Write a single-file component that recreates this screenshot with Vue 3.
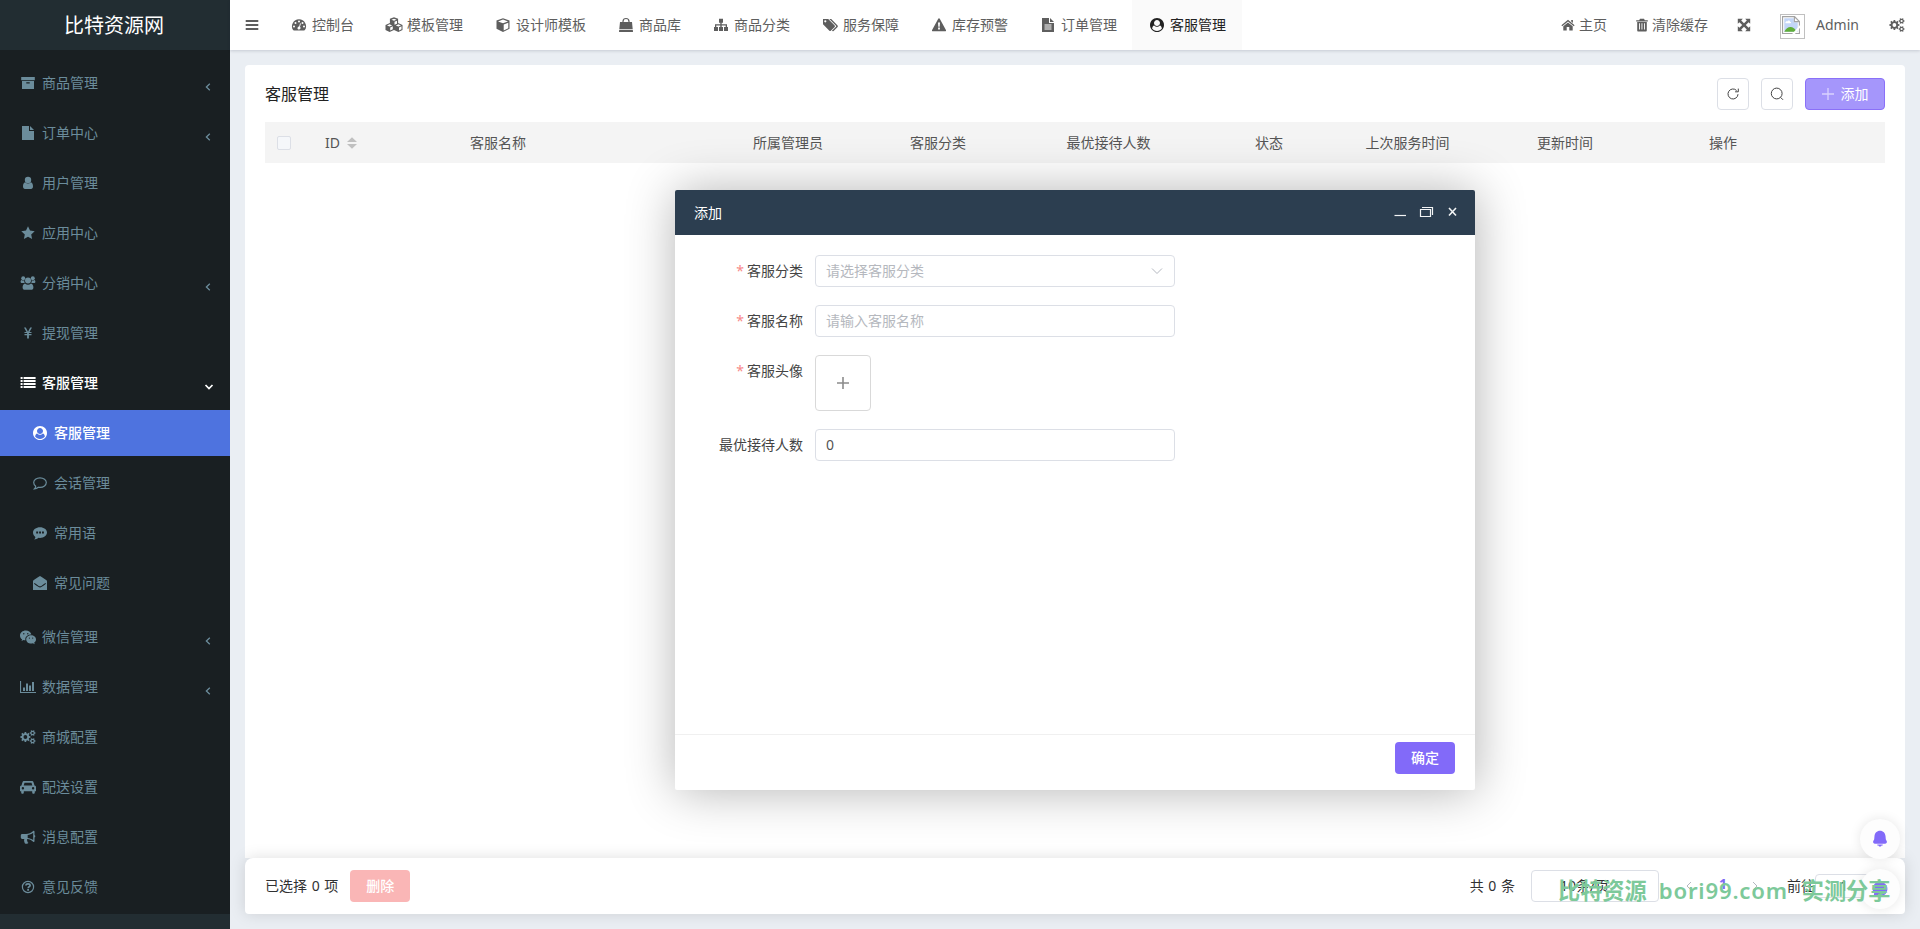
<script setup>
// Builds a cog outline with a round hole, for use with fill-rule="evenodd"
function gear(cx, cy, outer, inner, teeth, hole) {
  const step = (Math.PI * 2) / teeth
  const pt = (r, a) => (cx + r * Math.cos(a)).toFixed(2) + ' ' + (cy + r * Math.sin(a)).toFixed(2)
  const pts = []
  for (let i = 0; i < teeth; i++) {
    const a = i * step
    pts.push(pt(inner, a - step * 0.3), pt(outer, a - step * 0.2), pt(outer, a + step * 0.2), pt(inner, a + step * 0.3))
  }
  return `<path fill-rule="evenodd" d="M${pts.join('L')}ZM${cx - hole} ${cy}a${hole} ${hole} 0 1 0 ${hole * 2} 0a${hole} ${hole} 0 1 0 ${-hole * 2} 0Z"/>`
}

const icons = {
  archive: '<path fill-rule="evenodd" d="M1.2 2h13.6v3.2H1.2zM2 6h12v8H2zM6.3 7.2v1.2h3.4V7.2z"/>',
  file: '<path d="M2 1h7v5h5v9H2zM10 1l4 4h-4z"/>',
  user: '<circle cx="8" cy="5" r="3.2"/><path d="M5.2 7.3C3.6 7.8 3 9.600 3 11.500c0 1.500.8 2.500 2 2.500h6c1.200 0 2-1 2-2.500 0-1.900-.6-3.700-2.200-4.200a4.200 4.200 0 0 1-5.600 0z"/>',
  star: '<path d="M8 1.200l2 4.400 4.700.6-3.500 3.200.9 4.700L8 11.800l-4.100 2.300.9-4.700L1.300 6.200 6 5.600z"/>',
  users: '<circle cx="3.200" cy="3.300" r="2"/><circle cx="12.800" cy="3.300" r="2"/><circle cx="8" cy="5.600" r="3"/><path d="M4.500 5.300c-.5 1.300-.1 2.100.3 2.700H2C1.100 8 .6 7.500.6 6.700c0-.8.3-1.600.9-1.800 1.100.8 2.200.7 3 .4zM11.500 5.300c.5 1.300.1 2.100-.3 2.700H14c.9 0 1.400-.5 1.400-1.300 0-.8-.3-1.600-.9-1.800-1.100.8-2.200.7-3 .4zM5 8.400c-1.600.5-2.400 2-2.400 4 0 1.500.9 2.400 2.300 2.400h6.200c1.400 0 2.300-.9 2.300-2.400 0-2-.8-3.500-2.400-4a4.400 4.400 0 0 1-6 0z"/>',
  yen: '<path d="M4 2.500h1.800L8 6.700l2.200-4.200H12L9.500 7H11.500v1.100H8.900v1h2.600v1.100H8.900v3.300H7.100v-3.300H4.500V9.100h2.600v-1H4.500V7h2z"/>',
  list: '<path d="M.6 2h2v2h-2zM3.600 2h12v2h-12zM.6 5h2v2h-2zM3.600 5h12v2h-12zM.6 8h2v2h-2zM3.600 8h12v2h-12zM.6 11h2v2h-2zM3.600 11h12v2h-12z"/>',
  circleUser: '<path transform="translate(1 1) scale(.0078125)" d="M1523 1339q-22-155-87.500-257.500T1251 963q-67 74-159.500 115.500T896 1120t-195.500-41.500T541 963q-119 16-184.500 118.500T269 1339q106 150 271 237.500t356 87.500 356-87.500 271-237.500zM1280 640q0-159-112.500-271.500T896 256 624.500 368.500 512 640t112.500 271.500T896 1024t271.500-112.500T1280 640zm512 256q0 182-71 347.500t-190.500 286T1245 1721t-349 71q-182 0-348-71t-286-191-191-286T0 896t71-348 191-286T548 71 896 0t348 71 286 191 191 286 71 348z"/>',
  comment: '<path fill="none" stroke="currentColor" stroke-width="1.200" d="M8 2.800c3.600 0 6.300 2.200 6.300 4.800S11.600 12.400 8 12.400c-.6 0-1.100 0-1.600-.2-1.200 1-2.500 1.600-4 1.700.8-.8 1.200-1.600 1.300-2.600C2.400 10.400 1.700 9.100 1.700 7.600 1.700 5 4.400 2.800 8 2.800z"/>',
  commenting: '<path fill-rule="evenodd" d="M8 2.300c3.900 0 7 2.400 7 5.300s-3.100 5.300-7 5.300l-1.500-.1c-1.200 1-2.700 1.700-4.300 1.700.8-.8 1.200-1.700 1.200-2.600C1.900 10.900 1 9.400 1 7.600c0-2.900 3.100-5.300 7-5.300zM4.200 6.600v2h1.900v-2zm2.900 0v2H9v-2zm2.900 0v2h1.900v-2z"/>',
  envelope: '<path fill-rule="evenodd" d="M8 1c2 1.100 5.200 3 7 4.800V15H1V5.800C2.800 4 6 2.100 8 1zM2.600 8l-.6.800c1.500 1.100 3 2.300 4.300 3 1.300.8 2.100.8 3.400 0 1.300-.7 2.800-1.900 4.300-3l-.6-.8c-1.500 1.100-2.800 2.100-4.100 2.900-1 .6-1.600.6-2.600 0C5.400 10.100 4.100 9.100 2.600 8z"/>',
  wechat: '<path fill-rule="evenodd" d="M5.800 1.500c3 0 5.200 1.800 5.600 4.100C8 5.600 5.300 7.700 5.300 10.300l.1 1c-.7 0-1.300-.1-1.900-.3l-2 1.100.6-1.800C.8 9.400 0 8 0 6.400c0-2.700 2.600-4.900 5.800-4.900zM3.800 4a.7.7 0 1 0 0 1.400.7.7 0 0 0 0-1.400zM7.800 4a.7.7 0 1 0 0 1.400.7.7 0 0 0 0-1.400z"/><path fill-rule="evenodd" d="M11.100 6.300c2.700 0 4.900 1.800 4.900 4.100 0 1.300-.7 2.400-1.800 3.200l.5 1.600-1.800-1c-.6.2-1.200.3-1.800.3-2.700 0-4.900-1.800-4.900-4.100s2.200-4.100 4.900-4.100zM9.400 8.500a.6.6 0 1 0 0 1.200.6.6 0 0 0 0-1.200zM12.700 8.500a.6.6 0 1 0 0 1.200.6.6 0 0 0 0-1.200z"/>',
  chart: '<path d="M0 2h1.100v11H16v1.100H0zM3 8.500h2V12H3zM6 4.500h2V12H6zM9 6.500h2V12H9zM12 3h2v9h-2z"/>',
  cogs: gear(5.4, 8, 5.1, 3.9, 8, 1.9) + gear(12.6, 4, 3, 2.2, 6, 1.1) + gear(12.6, 12, 3, 2.2, 6, 1.1),
  car: '<path fill-rule="evenodd" d="M4.300 2h7.400c.9 0 1.600.5 1.900 1.400l.9 3.100c.9.200 1.500.8 1.500 1.800v4h-1.200v1c0 1-.5 1.500-1.300 1.500s-1.300-.5-1.300-1.500v-1H3.800v1c0 1-.5 1.500-1.300 1.500S1.200 14.300 1.200 13.300v-1H0v-4c0-1 .6-1.600 1.500-1.800l.9-3.100C2.700 2.500 3.400 2 4.300 2zM4.500 3.700l-.8 2.800h8.600l-.8-2.800zM2.900 8a1.200 1.200 0 1 0 0 2.400 1.200 1.200 0 0 0 0-2.400zM13.100 8a1.200 1.200 0 1 0 0 2.400 1.200 1.200 0 0 0 0-2.400z"/>',
  horn: '<path fill-rule="evenodd" d="M13.500 1.800c.7 0 1 .4 1 1v3.300c1.100.3 1.100 2.200 0 2.500v3.300c0 .6-.3 1-1 1-2.100-1.800-4.200-2.700-6-2.900-.8.500-.7 1.300 0 2-.4.700.2 1.300.9 1.800-.6 1.200-2.800 1.200-3.600.4-.4-1.500-1.100-2.700-.5-4.300H2.200C1.400 9.900.8 9.400.8 8.600V6.400c0-.8.600-1.400 1.400-1.400H6c2.500 0 5-1.100 7.500-3.200zM13.200 3.700C11.400 5 9.500 5.800 7.700 6v2.900c1.800.2 3.700.9 5.500 2.200z"/>',
  question: '<circle cx="8" cy="8" r="5.600" fill="none" stroke="currentColor" stroke-width="1.200"/><path fill="none" stroke="currentColor" stroke-width="1.700" d="M5.900 6.500C6 5.300 6.900 4.800 8 4.800c1.300 0 2.100.6 2.100 1.600 0 1.300-1.900 1.300-1.900 2.900"/><path d="M7.200 10.100h1.800v1.600H7.200z"/>',
  bars: '<path d="M1.700 3h12.600v2H1.700zM1.700 7h12.600v2H1.700zM1.700 11h12.600v2H1.700z"/>',
  gauge: '<path fill-rule="evenodd" d="M8 2.300a7 7 0 0 1 5.900 10.800c-.2.300-.5.500-.8.500H2.900c-.3 0-.6-.2-.8-.5A7 7 0 0 1 8 2.300zM3 8.400a1 1 0 1 0 0 2 1 1 0 0 0 0-2zM4.500 4.900a1 1 0 1 0 0 2 1 1 0 0 0 0-2zM8 3.400a1 1 0 1 0 0 2 1 1 0 0 0 0-2zM11.500 4.900a1 1 0 1 0 0 2 1 1 0 0 0 0-2zM13 8.400a1 1 0 1 0 0 2 1 1 0 0 0 0-2zM9 6.300l-.8 3.100c-.9 0-1.600.6-1.700 1.500 0 .9.600 1.700 1.500 1.700 1.500 0 2.100-1.800 1-2.800l.9-3.200z"/>',
  cube: '<path fill-rule="evenodd" d="M8 1.200l6.500 2.400v8.200L8 15l-6.500-3.200V3.600zM8 2.600L3 4.400l5 1.900 5-1.900zM8.700 7.500v6l4.600-2.300V5.800z"/>',
  cubes: '<path fill-rule="evenodd" d="M8 .3l4.100 1.500v4.300L16.500 8v5L12.400 15 8 13l-4.400 2-4.100-2V8l4.400-1.900V1.800zM8 1.700L5.500 2.700 8 3.700l2.500-1zM8.500 4.800v3l2.500-1.100V3.700zM3.600 7.300L1 8.400l2.600 1.200 2.600-1.200zM4.200 10.500v3.100L6.800 12.300V9.300zM12.400 7.300L9.800 8.400l2.600 1.200L15 8.400zM13 10.500v3.100l2.500-1.300V9.300z"/>',
  bag: '<path fill="none" stroke="currentColor" stroke-width="1.200" d="M5 7V4.500C5 2.500 6.300 1.500 8 1.500s3 1 3 3V7"/><path d="M2 5h12l.7 7H1.300zM1.200 12.800h13.600l.2 2.200H1z"/>',
  sitemap: '<path d="M6 1.800h4v4H8.700v1.500H14v2.600h1v4h-4v-4h1.700V8.500h-4v1.400H10v4H6v-4h1.300V8.500h-4v1.400H5v4H1v-4h1V7.300h5.300V5.800H6z"/>',
  tags: '<path fill-rule="evenodd" d="M1 2h5.200l6.500 6.500c.4.400.4 1 0 1.400l-3.900 3.900c-.4.400-1 .4-1.400 0L1 7.300zM3.300 3.200a1.100 1.100 0 1 0 0 2.200 1.100 1.100 0 0 0 0-2.200z"/><path d="M7.300 2h1.900l6.400 6.500c.4.400.4 1 0 1.400l-4 4c-.6.600-1.200.4-1.700-.1L14 9.700c.3-.3.300-.7 0-1z"/>',
  warning: '<path fill-rule="evenodd" d="M8 1.300c.4 0 .7.200.9.600l6 11c.4.700 0 1.400-.8 1.400H1.900c-.8 0-1.200-.7-.8-1.400l6-11c.2-.4.500-.6.900-.6zM7 5.500l.3 4.200h1.400L9 5.500zM7.100 10.600v1.800h1.800v-1.800z"/>',
  fileText: '<path fill-rule="evenodd" d="M2 1h7v5h5v9H2zM10 1l4 4h-4zM4.500 7.600v1h7v-1zm0 2v1h7v-1zm0 2v1h7v-1z"/>',
  home: '<path d="M8 2.700l6.600 5.600-.8 1L8 4.400 2.200 9.300l-.8-1zM11.200 3h1.700v3l-1.700-1.500zM8 5.400L12.700 9.300V13.500H9.300V10H6.700v3.500H3.300V9.300z"/>',
  trash: '<path d="M6 1.800h4l.8 1.400h3v1.200H2.200V3.200h3z"/><path fill-rule="evenodd" d="M3.200 5h9.600v8.200c0 .8-.4 1.300-1.100 1.300H4.300c-.7 0-1.100-.5-1.100-1.300zM5 6.200v6.400h.9V6.200zm2.500 0v6.400h.9V6.200zm2.500 0v6.400h.9V6.200z"/>',
  expand: '<path d="M1.800 1.800h5L5.200 3.400 8 6.200l2.800-2.800-1.600-1.600h5v5l-1.600-1.600L9.800 8l2.800 2.800 1.600-1.600v5h-5l1.600-1.600L8 9.800l-2.800 2.800 1.600 1.600h-5v-5l1.600 1.600L6.200 8 3.400 5.200 1.800 6.800z"/>',
}

const menu = [
  { text: '商品管理', icon: 'archive', more: true },
  { text: '订单中心', icon: 'file', more: true },
  { text: '用户管理', icon: 'user' },
  { text: '应用中心', icon: 'star' },
  { text: '分销中心', icon: 'users', more: true },
  { text: '提现管理', icon: 'yen' },
  {
    text: '客服管理',
    icon: 'list',
    open: true,
    children: [
      { text: '客服管理', icon: 'circleUser', active: true },
      { text: '会话管理', icon: 'comment' },
      { text: '常用语', icon: 'commenting' },
      { text: '常见问题', icon: 'envelope' },
    ],
  },
  { text: '微信管理', icon: 'wechat', more: true },
  { text: '数据管理', icon: 'chart', more: true },
  { text: '商城配置', icon: 'cogs' },
  { text: '配送设置', icon: 'car' },
  { text: '消息配置', icon: 'horn' },
  { text: '意见反馈', icon: 'question' },
]

const tabs = [
  { text: '控制台', icon: 'gauge' },
  { text: '模板管理', icon: 'cubes' },
  { text: '设计师模板', icon: 'cube' },
  { text: '商品库', icon: 'bag' },
  { text: '商品分类', icon: 'sitemap' },
  { text: '服务保障', icon: 'tags' },
  { text: '库存预警', icon: 'warning' },
  { text: '订单管理', icon: 'fileText' },
  { text: '客服管理', icon: 'circleUser', active: true },
]

const columns = ['客服名称', '所属管理员', '客服分类', '最优接待人数', '状态', '上次服务时间', '更新时间', '操作']
</script>

<template>
  <div class="app">
    <aside class="sidebar">
      <div class="brand">比特资源网</div>
      <nav class="menu">
        <template v-for="item in menu" :key="item.text">
          <a class="menu-item" :class="{ open: item.open }">
            <svg class="ico" viewBox="0 0 16 16" v-html="icons[item.icon]"></svg>
            <span>{{ item.text }}</span>
            <svg v-if="item.more" class="arrow" viewBox="0 0 10 10"><path d="M6.800 1.700L3.400 5l3.400 3.300" /></svg>
            <svg v-if="item.open" class="arrow" viewBox="0 0 10 10"><path d="M1.500 3L5 6.500 8.500 3" /></svg>
          </a>
          <div v-if="item.children" class="submenu">
            <a v-for="sub in item.children" :key="sub.text" class="menu-item sub" :class="{ active: sub.active }">
              <svg class="ico" viewBox="0 0 16 16" v-html="icons[sub.icon]"></svg>
              <span>{{ sub.text }}</span>
            </a>
          </div>
        </template>
      </nav>
    </aside>

    <div class="main">
      <header class="topbar">
        <svg class="ico burger" viewBox="0 0 16 16" v-html="icons.bars"></svg>
        <nav class="tabs">
          <a v-for="tab in tabs" :key="tab.text" class="tab" :class="{ current: tab.active }">
            <span class="tab-icon"><svg class="ico" viewBox="0 0 16 16" v-html="icons[tab.icon]"></svg></span>
            <span>{{ tab.text }}</span>
          </a>
        </nav>
        <div class="tools">
          <a class="tool home"><svg class="ico" viewBox="0 0 16 16" v-html="icons.home"></svg>主页</a>
          <a class="tool clear"><svg class="ico" viewBox="0 0 16 16" v-html="icons.trash"></svg>清除缓存</a>
          <svg class="ico" viewBox="0 0 16 16" v-html="icons.expand"></svg>
          <span class="avatar">
            <svg viewBox="0 0 16 16">
              <path d="M.5.500h10.500l4.500 4.500v10.500H.5z" fill="#fff" stroke="#a3a3a3" />
              <path d="M2 2h8.500v3.500H14V14H2z" fill="#c3d6f8" />
              <path d="M3 6c0-1 1-1.500 1.700-1.200C5.200 3.500 7 3.700 7.200 5c1 0 1.300 1.300.3 1.500H3.600C3.200 6.500 3 6.300 3 6z" fill="#fff" />
              <path d="M2 14c1.500-3 3.500-4.500 6-4.300 2 .2 4 2 5 4.300z" fill="#5fae3a" />
              <path d="M11 .5V5h4.500z" fill="#fff" stroke="#a3a3a3" />
              <path d="M9 16l7-8v2.500L11.500 16z" fill="#fff" />
            </svg>
          </span>
          <span class="username">Admin</span>
          <svg class="ico cogs" viewBox="0 0 16 16" v-html="icons.cogs"></svg>
        </div>
      </header>

      <section class="card">
        <div class="card-head">
          <h2>客服管理</h2>
          <button class="square">
            <svg viewBox="0 0 14 14"><path d="M12 7.200A5 5 0 1 1 10.600 3.500M12.300 1.600v3.200H9.100" /></svg>
          </button>
          <button class="square">
            <svg viewBox="0 0 14 14"><circle cx="6.700" cy="6.500" r="5.400" /><path d="M10.600 10.400l2.400 2.400" /></svg>
          </button>
          <button class="add">
            <svg viewBox="0 0 12 12"><path d="M6 0v12M0 6h12" /></svg>
            添加
          </button>
        </div>
        <div class="thead">
          <span class="check"></span>
          <span class="id">
            ID
            <svg viewBox="0 0 10 12"><path d="M5 .3L10 5H0zM0 7h10l-5 4.700z" /></svg>
          </span>
          <span v-for="col in columns" :key="col">{{ col }}</span>
        </div>
      </section>

      <footer class="pagebar">
        <span>已选择 0 项</span>
        <button class="delete">删除</button>
        <span class="total">共 0 条</span>
        <span class="size">10条/页</span>
        <svg class="pg prev" viewBox="0 0 10 10"><path d="M7 1L3 5l4 4" /></svg>
        <b class="page-no">1</b>
        <svg class="pg next" viewBox="0 0 10 10"><path d="M3 1l4 4-4 4" /></svg>
        <span>前往</span>
        <span class="jump">1</span>
      </footer>
    </div>

    <section class="dialog">
      <header class="dialog-head">
        <span>添加</span>
        <svg viewBox="0 0 64 12">
          <path d="M.500 9.500h11.500" />
          <path d="M26.500 3.500h10v7h-10zM28 1.500h10.500V9" />
          <path stroke-width="1.600" d="M55 2l7 7.500M62 2l-7 7.500" />
        </svg>
      </header>
      <div class="form">
        <div class="row">
          <label><i>*</i>客服分类</label>
          <div class="field hint">
            请选择客服分类
            <svg viewBox="0 0 12 8"><path d="M1 1.500l5 5 5-5" /></svg>
          </div>
        </div>
        <div class="row">
          <label><i>*</i>客服名称</label>
          <div class="field hint">请输入客服名称</div>
        </div>
        <div class="row">
          <label><i>*</i>客服头像</label>
          <div class="upload"><svg viewBox="0 0 12 12"><path d="M6 0v12M0 6h12" /></svg></div>
        </div>
        <div class="row">
          <label>最优接待人数</label>
          <div class="field">0</div>
        </div>
      </div>
      <footer class="dialog-foot"><button>确定</button></footer>
    </section>

    <div class="floaters">
      <span class="bubble">
        <svg viewBox="0 0 16 18"><path d="M8 .8c3.200 0 5.200 2.300 5.500 5.200l.3 3.200c.1.800.9 1.300 1.100 2.300.2 1.200-.5 2.200-1.900 2.200H3c-1.400 0-2.100-1-1.900-2.200.2-1 1-1.500 1.100-2.300L2.500 6C2.800 3.100 4.800.8 8 .8zM5.300 14.600h5.400v1H9.500c-.3 1.500-2.700 1.500-3 0H5.300z" /></svg>
      </span>
      <span class="bubble">
        <svg viewBox="0 0 16 18"><path d="M8 1.500a7.500 7.500 0 1 1-3.500 14.200l-3 .6.700-2.800A7.500 7.500 0 0 1 8 1.500z" /></svg>
      </span>
    </div>

    <div class="watermark">
      <span>比特资源</span><span class="site">bori99.com</span><span>实测分享</span>
    </div>
  </div>
</template>

<style>
html,
body {
  margin: 0;
  overflow: hidden;
}
</style>

<style scoped>
.app {
  position: relative;
  display: flex;
  width: 1920px;
  height: 929px;
  overflow: hidden;
  background: #eaeef3;
  color: #303133;
  font: 14px/20px 'Noto Sans', 'Noto Sans CJK SC', sans-serif;
}
.app * {
  box-sizing: border-box;
}
button {
  padding: 0;
  border: 0;
  font: inherit;
}
.ico {
  flex: none;
  width: 16px;
  height: 16px;
  overflow: visible;
  fill: currentColor;
}

.sidebar {
  display: flex;
  flex: none;
  flex-direction: column;
  width: 230px;
  background: #222d32;
}
.brand {
  flex: none;
  height: 50px;
  padding-right: 2px;
  color: #fff;
  font-size: 20px;
  line-height: 52px;
  text-align: center;
}
.menu {
  height: 864px;
  padding-top: 10px;
  background: #191f22;
}
.menu-item {
  display: flex;
  align-items: center;
  gap: 6px;
  height: 46px;
  margin-bottom: 4px;
  padding: 0 17px 0 20px;
  color: #6b8c9b;
}
.menu-item.open {
  color: #fff;
  font-weight: 500;
}
.arrow {
  width: 10px;
  height: 10px;
  margin: 8px 0 0 auto;
  fill: none;
  stroke: currentColor;
  stroke-width: 1.3;
}
.open .arrow {
  margin-top: 7px;
  margin-right: -1px;
  stroke-width: 1.7;
}
.submenu {
  padding-bottom: 4px;
}
.sub {
  padding-left: 32px;
}
.sub.active {
  background: #4e73df;
  color: #fff;
  font-weight: 500;
}

.main {
  display: flex;
  flex: 1;
  flex-direction: column;
  min-width: 0;
}
.topbar {
  z-index: 1;
  display: flex;
  flex: none;
  align-items: center;
  height: 50px;
  padding: 0 15px 0 14px;
  background: #fff;
  box-shadow: 0 1px 3px rgba(0, 21, 41, 0.16);
  color: #5e5e5e;
}
.burger {
  margin-right: 14px;
}
.tabs {
  display: flex;
}
.tab {
  display: flex;
  align-items: center;
  gap: 4px;
  height: 50px;
  padding: 0 15px;
}
.tab-icon {
  display: flex;
  justify-content: center;
  width: 19px;
}
.tab.current {
  width: 110px;
  background: #fafafa;
  color: #222;
}
.tools {
  display: flex;
  align-items: center;
  margin-left: auto;
}
.tool {
  display: flex;
  align-items: center;
  gap: 3px;
}
.home {
  margin-right: 27px;
}
.clear {
  gap: 2px;
  margin-right: 28px;
}
.avatar {
  display: block;
  width: 25px;
  height: 25px;
  margin: 3px 11px 0 28px;
  padding: 1px;
  border: 1px solid #c0c0c0;
}
.avatar svg {
  display: block;
  width: 18px;
  height: 18px;
}
.username {
  width: 44px;
}
.cogs {
  margin-left: 29px;
}

.card {
  flex: 1;
  margin: 15px 15px 0;
  padding: 13px 20px 0;
  border-radius: 4px 4px 0 0;
  background: #fff;
}
.card-head {
  display: flex;
  align-items: center;
  height: 32px;
}
.card-head h2 {
  flex: 1;
  margin: 0;
  color: #222;
  font-size: 16px;
  font-weight: 400;
}
.square {
  display: flex;
  align-items: center;
  justify-content: center;
  width: 32px;
  height: 32px;
  margin-right: 12px;
  border: 1px solid #dcdfe6;
  border-radius: 4px;
  background: #fff;
}
.square svg {
  width: 14px;
  height: 14px;
  fill: none;
  stroke: #444;
}
.add {
  display: flex;
  align-items: center;
  justify-content: center;
  gap: 7px;
  width: 80px;
  height: 32px;
  border: 1px solid #8a70f8;
  border-radius: 4px;
  background: #a596fb;
  color: #fff;
}
.add svg {
  width: 12px;
  height: 12px;
  stroke: #d9d2fe;
  stroke-width: 1.3;
}
.thead {
  display: grid;
  grid-template-columns: 48px 145px 283px 157px 156.5px 188.5px 110.5px 171.5px 172px 1fr;
  align-items: center;
  height: 41px;
  margin-top: 12px;
  padding-left: 12px;
  background: #f4f4f4;
  color: #555;
  white-space: nowrap;
}
.check {
  width: 14px;
  height: 14px;
  border: 1px solid #dcdfe6;
  border-radius: 2px;
  background: #f5f7fa;
}
.id {
  display: flex;
  align-items: center;
  gap: 7px;
}
.id svg {
  width: 10px;
  height: 12px;
  fill: #c0c0c0;
}

.pagebar {
  display: flex;
  flex: none;
  align-items: center;
  height: 56px;
  margin: 0 15px 15px;
  padding: 0 20px;
  border-radius: 8px 8px 4px 4px;
  background: #fff;
  box-shadow: 0 0 16px rgba(0, 0, 0, 0.13);
  white-space: nowrap;
  word-spacing: 1px;
}
.delete {
  width: 60px;
  height: 32px;
  margin-left: 12px;
  border-radius: 4px;
  background: #fab6b6;
  color: #fff;
  font-weight: 500;
}
.total {
  margin-left: auto;
}
.size {
  width: 128px;
  height: 32px;
  margin-left: 16px;
  padding-left: 28px;
  border: 1px solid #dcdfe6;
  border-radius: 4px;
  line-height: 30px;
}
.pg {
  width: 10px;
  height: 10px;
  fill: none;
  stroke: #b4b8c0;
}
.prev {
  margin-left: 25px;
}
.page-no {
  width: 10px;
  margin: -4px 22px 0 24px;
  color: #7f68f5;
  text-align: center;
}
.next {
  margin-right: 27px;
}
.jump {
  width: 58px;
  height: 24px;
  margin-right: 12px;
  border: 1px solid #dcdfe6;
  border-radius: 4px;
  line-height: 22px;
  text-align: center;
}

.dialog {
  position: absolute;
  top: 190px;
  left: 675px;
  z-index: 5;
  display: flex;
  flex-direction: column;
  width: 800px;
  height: 600px;
  border-radius: 2px;
  background: #fff;
  box-shadow: 1px 1px 50px rgba(0, 0, 0, 0.3);
}
.dialog-head {
  display: flex;
  align-items: center;
  justify-content: space-between;
  height: 45px;
  padding: 1px 17px 0 19px;
  border-radius: 2px 2px 0 0;
  background: #2c3e50;
  color: #fff;
}
.dialog-head svg {
  width: 64px;
  height: 12px;
  margin-top: -2px;
  fill: none;
  stroke: #f2f4f5;
  stroke-width: 1.2;
}
.form {
  display: flex;
  flex: 1;
  flex-direction: column;
  gap: 18px;
  padding-top: 20px;
}
.row {
  display: flex;
  gap: 12px;
}
.row label {
  width: 128px;
  color: #444;
  line-height: 32px;
  text-align: right;
}
.row i {
  margin-right: 3px;
  color: #f78989;
  font-style: normal;
}
.field {
  display: flex;
  align-items: center;
  justify-content: space-between;
  width: 360px;
  height: 32px;
  padding: 0 11px 0 10px;
  border: 1px solid #dcdfe6;
  border-radius: 4px;
  color: #555;
}
.field.hint {
  color: #b5b8be;
}
.field svg {
  width: 12px;
  height: 8px;
  fill: none;
  stroke: #b4b8c0;
}
.upload {
  display: flex;
  align-items: center;
  justify-content: center;
  width: 56px;
  height: 56px;
  border: 1px solid #d9d9d9;
  border-radius: 4px;
}
.upload svg {
  width: 12px;
  height: 12px;
  stroke: #8c8c8c;
  stroke-width: 1.6;
}
.dialog-foot {
  display: flex;
  justify-content: flex-end;
  height: 56px;
  padding: 7px 20px 0;
  border-top: 1px solid #f0f0f0;
}
.dialog-foot button {
  width: 60px;
  height: 32px;
  border-radius: 4px;
  background: #826af9;
  color: #fff;
  font-weight: 500;
}

.floaters {
  position: absolute;
  top: 819px;
  right: 20px;
  z-index: 6;
  display: flex;
  flex-direction: column;
  gap: 10px;
}
.bubble {
  display: flex;
  align-items: center;
  justify-content: center;
  width: 40px;
  height: 40px;
  border-radius: 50%;
  background: #fdfdfd;
  box-shadow: 0 0 12px rgba(0, 0, 0, 0.1);
}
.bubble svg {
  width: 16px;
  height: 18px;
  fill: #826af9;
}
.watermark {
  position: absolute;
  top: 876px;
  left: 1558px;
  z-index: 7;
  display: flex;
  gap: 12px;
  color: #7dc99a;
  font-size: 22.2px;
  font-weight: 700;
  line-height: 30px;
  white-space: nowrap;
}
.site {
  width: 131px;
  font-family: 'Noto Sans', sans-serif;
  font-weight: 600;
  letter-spacing: 0.8px;
}
</style>
